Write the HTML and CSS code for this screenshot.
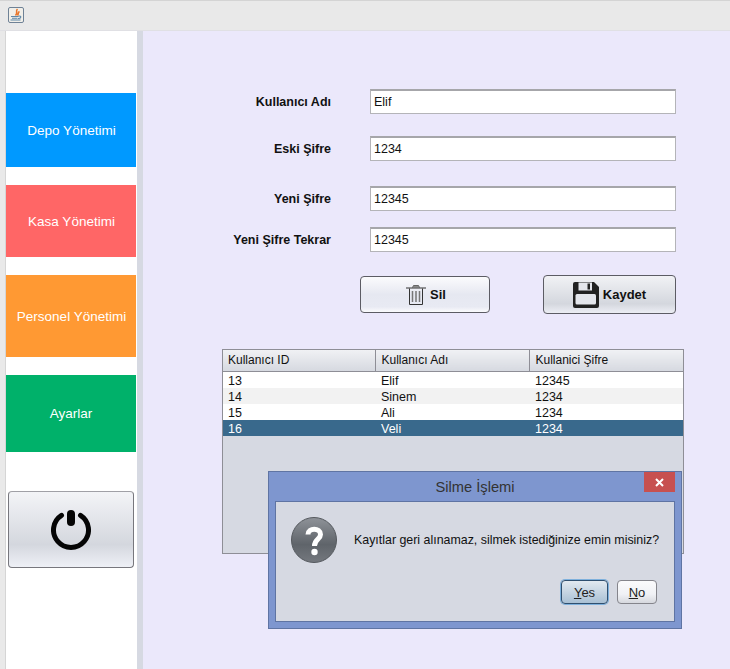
FILE: index.html
```html
<!doctype html>
<html>
    <head>
        <meta charset="utf-8">
        <title>Ayarlar</title>
        <link rel="stylesheet" href="styles.css">
    </head>
    <body>
        <div class="titlebar">
            <span class="app-icon">
                <svg width="16" height="16" viewBox="0 0 16 16">
                    <rect x="0.5" y="0.5" width="15" height="15" rx="1.500" fill="#f1efe9" stroke="#6f8296"/>
                    <path d="M9.500 2C7 4 10.500 5 7.500 8.500M11.500 4.500C9.500 5.500 11 6.500 9.500 8.500" fill="none" stroke="#e8762b" stroke-width="1.600"/>
                    <path d="M3 9.500H10.500M4 11.200H9.500M2.500 13H12.500M10.500 9C13.800 8.500 13.500 11.500 10 11.500" fill="none" stroke="#5f87a8" stroke-width="1.100"/>
                </svg>
            </span>
        </div>
        <div class="window">
            <div class="sidebar">
                <div class="menu-item depo">Depo Yönetimi</div>
                <div class="menu-item kasa">Kasa Yönetimi</div>
                <div class="menu-item personel">Personel Yönetimi</div>
                <div class="menu-item ayarlar">Ayarlar</div>
                <button type="button" class="btn-power">
                    <svg width="40" height="40" viewBox="0 0 40 40">
                        <path d="M10.500 5.300A17.500 17.500 0 1 0 29.500 5.300" fill="none" stroke="#050505" stroke-width="5" stroke-linecap="round"/>
                        <path d="M20 4V12" fill="none" stroke="#050505" stroke-width="8" stroke-linecap="round"/>
                    </svg>
                </button>
            </div>
            <div class="gutter"></div>
            <div class="main">
                <div class="form">
                    <label>Kullanıcı Adı</label>
                    <input type="text" value="Elif">
                    <label>Eski Şifre</label>
                    <input type="text" value="1234">
                    <label>Yeni Şifre</label>
                    <input type="text" value="12345">
                    <label>Yeni Şifre Tekrar</label>
                    <input type="text" value="12345">
                </div>
                <div class="actions">
                    <button type="button" class="btn-sil">
                        <svg width="20" height="20" viewBox="0 0 20 20">
                            <path d="M6.500 2.500L7.500 0.500H12.500L13.500 2.500" fill="#8a8a8a" stroke="#666"/>
                            <path d="M0 3H20" stroke="#333" stroke-width="1"/>
                            <path d="M3.500 3.500V19.500H16.500V3.500" fill="none" stroke="#333"/>
                            <path d="M6.500 6V17M10 6V17M13.500 6V17" stroke="#777" stroke-width="1.500"/>
                        </svg>
                        Sil
                    </button>
                    <button type="button" class="btn-kaydet">
                        <svg width="26" height="26" viewBox="0 0 26 26">
                            <path d="M2 0H21L26 5V24A2 2 0 0 1 24 26H2A2 2 0 0 1 0 24V2A2 2 0 0 1 2 0Z" fill="#222"/>
                            <rect x="5.500" y="0.500" width="13.500" height="8" fill="#e4e6ec"/>
                            <rect x="14.500" y="1.500" width="2.500" height="6" fill="#222"/>
                            <rect x="2.500" y="12" width="20.500" height="10.500" rx="1.500" fill="#e4e6ec"/>
                        </svg>
                        Kaydet
                    </button>
                </div>
                <div class="table-wrap">
                    <table>
                        <tr>
                            <th class="col-id">Kullanıcı ID</th>
                            <th class="col-name">Kullanıcı Adı</th>
                            <th>Kullanici Şifre</th>
                        </tr>
                        <tr><td>13</td><td>Elif</td><td>12345</td></tr>
                        <tr class="alt"><td>14</td><td>Sinem</td><td>1234</td></tr>
                        <tr><td>15</td><td>Ali</td><td>1234</td></tr>
                        <tr class="selected"><td>16</td><td>Veli</td><td>1234</td></tr>
                    </table>
                </div>
                <div class="dialog">
                    <div class="dialog-title">
                        Silme İşlemi
                        <span class="dialog-close">
                            <svg width="9" height="9" viewBox="0 0 9 9">
                                <path d="M1 1L8 8M8 1L1 8" stroke="#fff" stroke-width="2"/>
                            </svg>
                        </span>
                    </div>
                    <div class="dialog-body">
                        <div class="dialog-message">
                            <svg width="46" height="46" viewBox="0 0 46 46">
                                <defs>
                                    <linearGradient id="qfill" x1="0" y1="0" x2="0" y2="1">
                                        <stop offset="0" stop-color="#8f9399"/>
                                        <stop offset="0.6" stop-color="#5f646a"/>
                                        <stop offset="1" stop-color="#74787e"/>
                                    </linearGradient>
                                </defs>
                                <circle cx="23" cy="23" r="22.500" fill="url(#qfill)" stroke="#55595e"/>
                                <path d="M17 17.500C17 10.500 29.500 10.500 29.500 17.500C29.500 22.500 23.500 22 23.500 29" fill="none" stroke="#fff" stroke-width="5"/>
                                <circle cx="23.500" cy="35" r="3.200" fill="#fff"/>
                            </svg>
                            <span class="dialog-text">Kayıtlar geri alınamaz, silmek istediğinize emin misiniz?</span>
                        </div>
                        <div class="dialog-actions">
                            <button type="button" class="btn-yes"><u>Y</u>es</button>
                            <button type="button" class="btn-no"><u>N</u>o</button>
                        </div>
                    </div>
                </div>
            </div>
        </div>
    </body>
</html>
```

FILE: styles.css
```css
html, body {
    margin: 0;
    height: 669px;
    overflow: hidden;
}
body {
    font-family: "Liberation Sans", Arial, sans-serif;
    font-size: 12px;
    color: #111;
    background-color: #e9e9e9;
}
svg {
    display: block;
}
button {
    font-family: inherit;
    cursor: pointer;
    padding: 0;
}
.titlebar {
    height: 29px;
    border-top: 1px solid #d4d4d4;
    padding-left: 8px;
}
.app-icon {
    display: block;
    padding-top: 6px;
}
.window {
    display: flex;
    height: 639px;
    padding-left: 5px;
    border-top: 1px solid #e0e0e4;
    box-sizing: border-box;
}

/* left menu */
.sidebar {
    width: 131px;
    border-left: 1px solid #d5d5d5;
    background-color: #fff;
    padding-top: 62px;
    display: flex;
    flex-direction: column;
    align-items: flex-start;
    gap: 18px;
}
.menu-item {
    width: 130px;
    display: flex;
    align-items: center;
    justify-content: center;
    padding: 1px 0 0 1px;
    box-sizing: border-box;
    color: #fff;
    font-size: 13.500px;
}
.depo { height: 74px; background-color: #0099ff; }
.kasa { height: 72px; background-color: #ff6666; }
.personel { height: 82px; background-color: #ff9933; }
.ayarlar { height: 77px; background-color: #00b16a; padding: 0; }
.btn-power {
    width: 126px;
    height: 77px;
    margin: 21px 0 0 2px;
    display: flex;
    align-items: center;
    justify-content: center;
    border: 1px solid #77777d;
    border-top-color: #a0a0a6;
    border-radius: 4px;
    background: linear-gradient(#f3f4f7, #d4d7de 70%, #eef0f6);
}
.gutter {
    width: 6px;
    background-color: #d6d9e2;
}

/* right side */
.main {
    flex: 1;
    position: relative;
    background-color: #ebe8fb;
    padding-top: 58px;
}
.form {
    display: grid;
    grid-template-columns: 188px 306px;
    grid-template-rows: 47px 50px 41px 26px;
    column-gap: 39px;
}
.form label {
    text-align: right;
    font-weight: bold;
    font-size: 12.500px;
    line-height: 27px;
}
.form input {
    width: 306px;
    height: 25px;
    box-sizing: border-box;
    border: 1px solid #b4b4b8;
    border-top: 2px solid #a6a6aa;
    background-color: #fff;
    padding: 0 4px 0 3px;
    font-family: inherit;
    font-size: 12.500px;
    color: #111;
}
.actions {
    display: flex;
    align-items: center;
    gap: 53px;
    margin: 22px 0 0 217px;
    font-weight: bold;
}
.actions button {
    display: flex;
    align-items: center;
    justify-content: center;
    gap: 4px;
    border: 1px solid #5c5c64;
    border-radius: 4px;
    font-weight: bold;
    font-size: 13px;
    color: #111;
}
.btn-sil {
    width: 130px;
    height: 37px;
    padding-left: 2px;
    background: linear-gradient(#fbfbfd, #e6e8f1 50%, #e8eaf3 85%, #fbfbfd);
}
.btn-kaydet {
    width: 133px;
    height: 39px;
    background: linear-gradient(#f1f2f5, #d4d7de 75%, #eceef4);
}
.table-wrap {
    width: 462px;
    height: 205px;
    margin: 35px 0 0 79px;
    box-sizing: border-box;
    border: 1px solid #8e8e96;
    background-color: #d6d9e2;
}
table {
    width: 100%;
    table-layout: fixed;
    border-collapse: collapse;
}
.col-id {
    width: 152px;
}
.col-name {
    width: 154px;
}
th {
    box-sizing: border-box;
    height: 21px;
    padding: 0 5px;
    text-align: left;
    font-weight: normal;
    border-right: 1px solid #8e8e96;
    border-bottom: 1px solid #8e8e96;
    background: linear-gradient(#f0f1f4, #d6d9e0);
}
th + th, td + td {
    padding-left: 6px;
}
th:last-child {
    border-right: none;
}
td {
    box-sizing: border-box;
    height: 16px;
    padding: 2px 5px 0;
    background-color: #fff;
    font-size: 12.500px;
    line-height: 14px;
}
.alt td {
    background-color: #f2f2f2;
}
.selected td {
    background-color: #39698c;
    color: #fff;
}

/* delete dialog */
.dialog {
    position: absolute;
    left: 125px;
    top: 440px;
    width: 414px;
    height: 158px;
    box-sizing: border-box;
    border: 1px solid #5f74a3;
    background-color: #7e96cf;
    padding: 0 6px 6px 6px;
    display: flex;
    flex-direction: column;
}
.dialog-title {
    height: 29px;
    line-height: 31px;
    text-align: center;
    font-size: 14.700px;
    color: #333;
    position: relative;
}
.dialog-close {
    position: absolute;
    right: 0;
    top: 0;
    width: 31px;
    height: 20px;
    background-color: #c75050;
    display: flex;
    align-items: center;
    justify-content: center;
}
.dialog-body {
    flex: 1;
    border: 1px solid #5f74a3;
    background-color: #d6d9e2;
    padding: 15px 17px 0 15px;
    display: flex;
    flex-direction: column;
}
.dialog-message {
    display: flex;
    align-items: center;
    gap: 17px;
    font-size: 12.400px;
}
.dialog-message svg {
    flex: none;
}
.dialog-text {
    white-space: nowrap;
}
.dialog-actions {
    display: flex;
    justify-content: flex-end;
    gap: 9px;
    margin-top: 17px;
}
.dialog-actions button {
    height: 24px;
    font-size: 13px;
    color: #222;
    border-radius: 4px;
}
.btn-yes {
    width: 47px;
    border: 1px solid #2f4f6f;
    box-shadow: 0 0 0 1px #7eb0dc;
    background: linear-gradient(#e2e9f0, #a9c0d4);
}
.btn-no {
    width: 40px;
    border: 1px solid #85858c;
    background: linear-gradient(#fbfbfc, #f0f1f5 60%, #d6d8de);
}
```
